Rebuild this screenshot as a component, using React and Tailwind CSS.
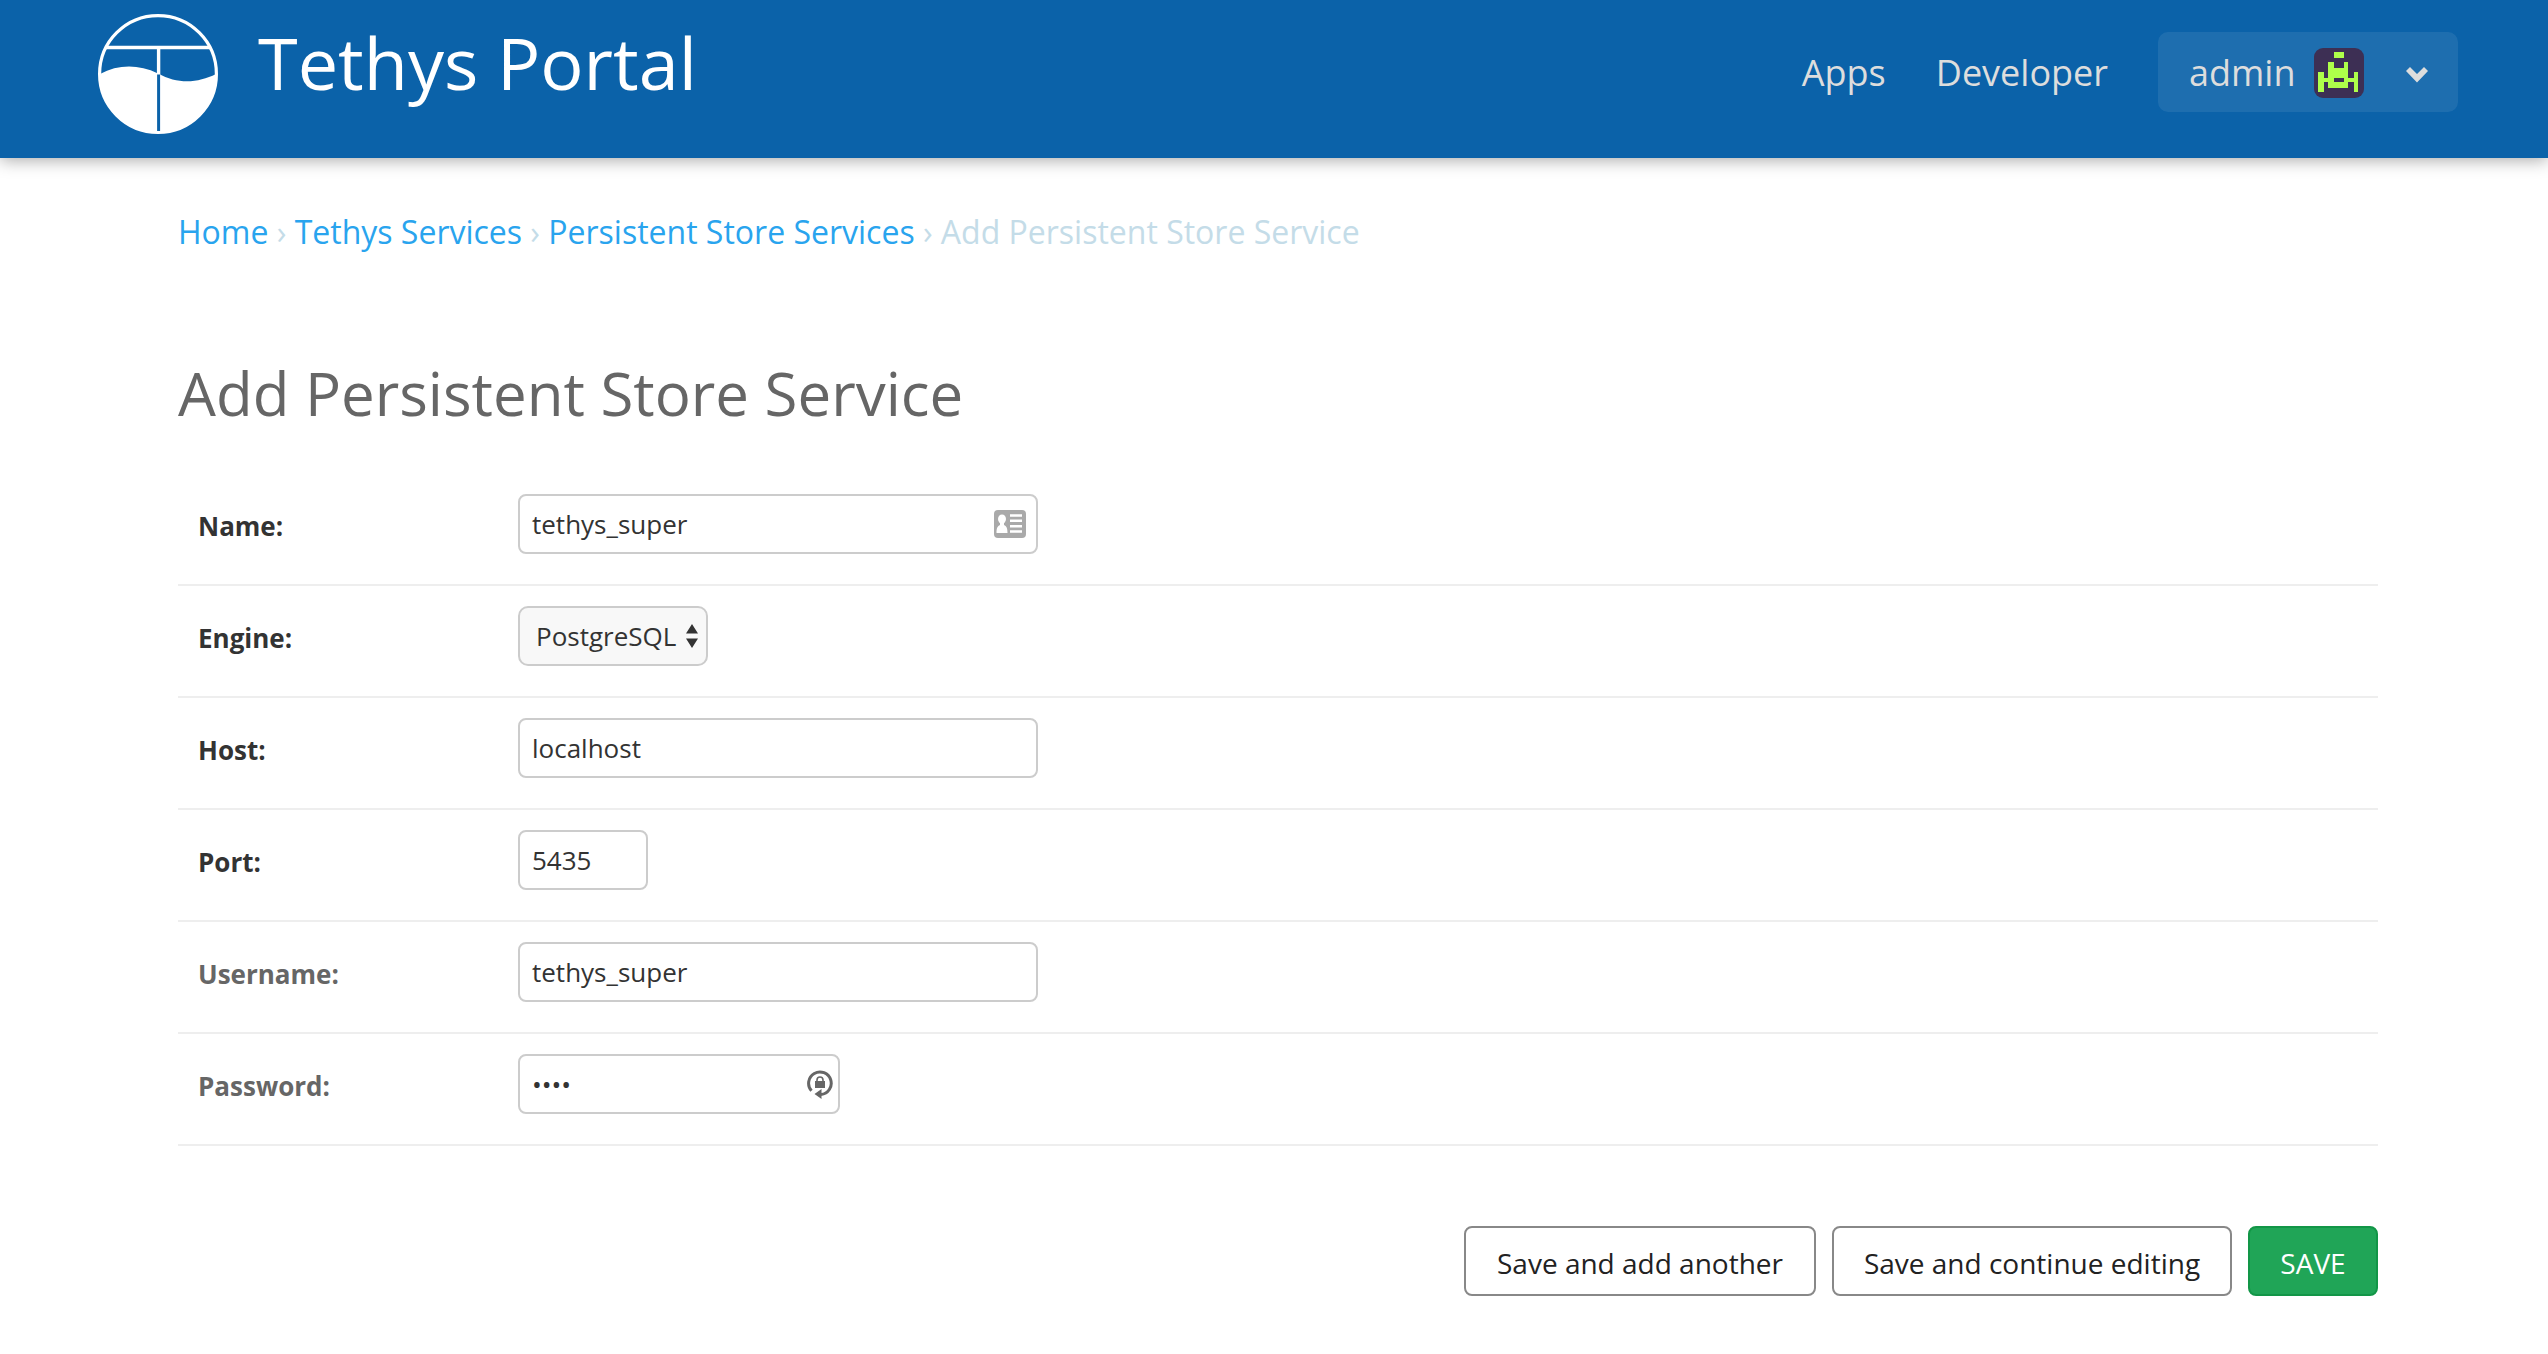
function Logo() {
  return (
    <svg width="120" height="120" viewBox="0 0 120 120" className="block" aria-hidden="true">
      <circle cx="60" cy="60" r="58.4" fill="none" stroke="#fff" strokeWidth="3.200" />
      <path d="M8 33.5H112" stroke="#fff" strokeWidth="3.400" />
      <path d="M60.600 33V62" stroke="#fff" strokeWidth="3.400" />
      <path d="M2 60C20 50.500 40 50 60 59.500C80 70.500 100 69 118 60A58 58.500 0 0 1 2 60Z" fill="#fff" />
      <path d="M60.600 60.500V117" stroke="#0b62a9" strokeWidth="3" />
    </svg>
  );
}

function Avatar() {
  return (
    <svg width="50" height="50" viewBox="0 0 50 50" className="block" aria-hidden="true">
      <rect width="50" height="50" rx="9" fill="#3d2f54" />
      <path
        fill="#aeff4a"
        fillRule="evenodd"
        d="M20 4H30V10H20ZM14 14H20V20H30V14H34V30H40V24H44V44H40V34H34V40H14V34H10V44H4V24H10V30H14ZM20 30V34H30V30Z"
      />
    </svg>
  );
}

function CardIcon() {
  return (
    <svg width="32" height="28" viewBox="0 0 32 28" className="block" aria-hidden="true">
      <rect width="32" height="28" rx="4" fill="#a9a9a9" />
      <ellipse cx="8" cy="9" rx="4" ry="4.500" fill="#fff" />
      <path d="M6 12H10V15C12.500 16 13.500 18 13.500 23H2.500C2.500 18 3.500 16 6 15Z" fill="#fff" />
      <path d="M16 5.500H28M16 10.800H28M16 16.200H28M16 21.500H28" stroke="#fff" strokeWidth="2.600" />
    </svg>
  );
}

function LockIcon() {
  return (
    <svg width="26" height="30" viewBox="0 0 26 30" className="block" aria-hidden="true">
      <path d="M4.500 20.800A11.300 11.300 0 1 1 14 24.500" fill="none" stroke="#666" strokeWidth="3" />
      <path d="M7.500 24L14.500 19V29Z" fill="#666" />
      <rect x="8" y="11" width="10" height="7" fill="#666" />
      <path d="M10 11.500V10A3 3 0 0 1 16 10V11.500" fill="none" stroke="#666" strokeWidth="1.600" />
    </svg>
  );
}

function Row({ label, muted, children }) {
  return (
    <div className="flex h-[112px] border-b-2 border-[#eee] pt-[20px] pl-[20px]">
      <div className={`w-[320px] pt-[14px] text-[26px] leading-[36px] font-bold ${muted ? "text-[#666]" : "text-[#333]"}`}>
        {label}
      </div>
      {children}
    </div>
  );
}

function Field({ width, value, icon }) {
  return (
    <div className={`flex h-[60px] items-center justify-between rounded-[8px] border-2 border-[#ccc] bg-white pl-[12px] text-[26px] leading-[36px] text-[#333] ${width}`}>
      <span>{value}</span>
      {icon}
    </div>
  );
}

export default function App() {
  return (
    <div className="h-[1354px] w-[2548px] overflow-hidden bg-white font-['Open_Sans','Noto_Sans',sans-serif]">
      <header className="flex h-[158px] bg-[#0b62a9] pr-[90px] pl-[98px] shadow-[0_2px_16px_rgba(0,0,0,0.35)]">
        <div className="pt-[14px]"><Logo /></div>
        <div className="pt-[13px] pl-[40px] text-[72px] leading-[98px] text-white">Tethys Portal</div>
        <nav className="ml-auto flex pt-[32px] text-[36px] leading-[82px] text-[#ddd]">
          <a className="mr-[50px]">Apps</a>
          <a className="mr-[50px]">Developer</a>
          <div className="flex h-[80px] w-[300px] items-center rounded-[10px] bg-white/8 pl-[31px]">
            <span className="pt-[2px]">admin</span>
            <span className="mt-[2px] ml-auto"><Avatar /></span>
            <svg width="24" height="18" viewBox="0 0 24 18" className="mt-[6px] mr-[29px] ml-[41px] block" aria-hidden="true">
              <path d="M5 1L12 8L19 1L23 5L12 16.500L1 5Z" fill="#ddd" />
            </svg>
          </div>
        </nav>
      </header>
      <main className="pr-[170px] pl-[178px]">
        <div className="flex gap-[8.3px] pt-[52px] text-[32px] leading-[44px] text-[#c4dce8]">
          <a className="text-[#29a4ee]">Home</a>
          <span>›</span>
          <a className="text-[#29a4ee]">Tethys Services</a>
          <span>›</span>
          <a className="text-[#29a4ee]">Persistent Store Services</a>
          <span>›</span>
          <span>Add Persistent Store Service</span>
        </div>
        <h1 className="mt-[99px] h-[121px] text-[60px] leading-[80px] text-[#666]">Add Persistent Store Service</h1>
        <form>
          <Row label="Name:">
            <Field width="w-[520px]" value="tethys_super" icon={<span className="mr-[10px]"><CardIcon /></span>} />
          </Row>
          <Row label="Engine:">
            <div className="flex h-[60px] w-[190px] items-center rounded-[10px] border-2 border-[#ccc] bg-[#f8f8f8] pl-[16px] text-[26px] leading-[36px] text-[#333]">
              <span>PostgreSQL</span>
              <svg width="12" height="24" viewBox="0 0 12 24" className="mr-[8px] ml-auto block" aria-hidden="true">
                <path d="M6 0L12 9.500H0ZM0 14.500H12L6 24Z" fill="#333" />
              </svg>
            </div>
          </Row>
          <Row label="Host:"><Field width="w-[520px]" value="localhost" /></Row>
          <Row label="Port:"><Field width="w-[130px]" value="5435" /></Row>
          <Row label="Username:" muted><Field width="w-[520px]" value="tethys_super" /></Row>
          <Row label="Password:" muted>
            <Field width="w-[322px]" value="••••" icon={<span className="mt-[2px] mr-[5px]"><LockIcon /></span>} />
          </Row>
        </form>
        <div className="mt-[80px] flex justify-end gap-[16px] text-[28px] leading-[70px] text-[#222]">
          <button className="h-[70px] w-[352px] rounded-[8px] border-2 border-[#888] bg-white">Save and add another</button>
          <button className="h-[70px] w-[400px] rounded-[8px] border-2 border-[#888] bg-white">Save and continue editing</button>
          <button className="h-[70px] w-[130px] rounded-[8px] border-2 border-[#129647] bg-[#20a557] text-white">SAVE</button>
        </div>
      </main>
    </div>
  );
}
